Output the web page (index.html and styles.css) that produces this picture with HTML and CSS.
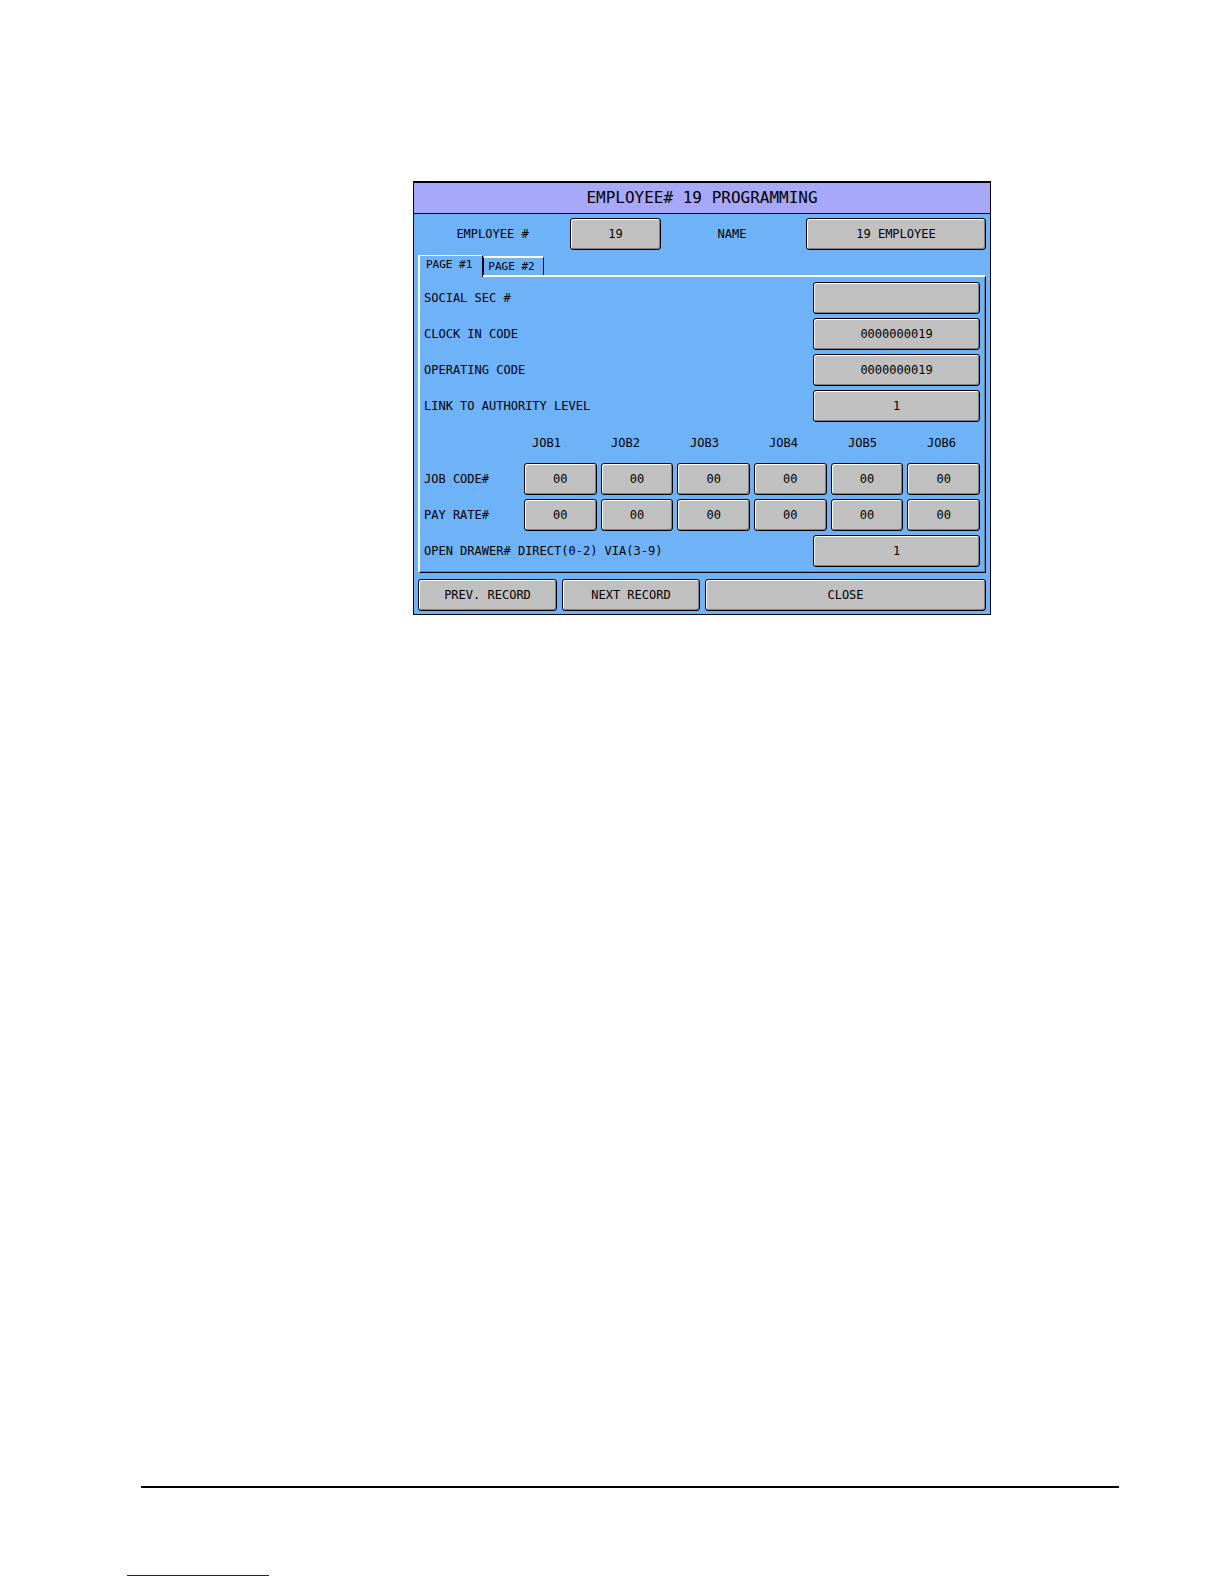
FILE: index.html
```html
<!DOCTYPE html>
<html lang="en">
<head>
    <meta charset="UTF-8">
    <meta name="viewport" content="width=device-width, initial-scale=1.0">
    <title>Employee# 19 Programming</title>
    <link rel="stylesheet" href="styles.css">
</head>
<body>

    <main class="page">
        <form class="dialog">
            <h1 class="title">EMPLOYEE# 19 PROGRAMMING</h1>

            <div class="dialog-body">
                <div class="record">
                    <label for="number">EMPLOYEE #</label>
                    <input class="key" id="number" type="text" value="19">
                    <label for="name">NAME</label>
                    <input class="key" id="name" type="text" value="19 EMPLOYEE">
                </div>

                <div class="tabs" role="tablist">
                    <button class="tab active" type="button" role="tab" aria-selected="true">PAGE #1</button>
                    <button class="tab" type="button" role="tab" aria-selected="false">PAGE #2</button>
                </div>

                <div class="panel" role="tabpanel">
                    <div class="row">
                        <label for="social">SOCIAL SEC #</label>
                        <input class="key" id="social" type="text">
                    </div>
                    <div class="row">
                        <label for="clock">CLOCK IN CODE</label>
                        <input class="key" id="clock" type="text" value="0000000019">
                    </div>
                    <div class="row">
                        <label for="operating">OPERATING CODE</label>
                        <input class="key" id="operating" type="text" value="0000000019">
                    </div>
                    <div class="row">
                        <label for="authority">LINK TO AUTHORITY LEVEL</label>
                        <input class="key" id="authority" type="text" value="1">
                    </div>

                    <div class="job-heads">
                        <span id="job1">JOB1</span>
                        <span id="job2">JOB2</span>
                        <span id="job3">JOB3</span>
                        <span id="job4">JOB4</span>
                        <span id="job5">JOB5</span>
                        <span id="job6">JOB6</span>
                    </div>
                    <div class="jobs">
                        <span id="code">JOB CODE#</span>
                        <input class="key" type="text" value="00" aria-labelledby="code job1">
                        <input class="key" type="text" value="00" aria-labelledby="code job2">
                        <input class="key" type="text" value="00" aria-labelledby="code job3">
                        <input class="key" type="text" value="00" aria-labelledby="code job4">
                        <input class="key" type="text" value="00" aria-labelledby="code job5">
                        <input class="key" type="text" value="00" aria-labelledby="code job6">
                    </div>
                    <div class="jobs">
                        <span id="rate">PAY RATE#</span>
                        <input class="key" type="text" value="00" aria-labelledby="rate job1">
                        <input class="key" type="text" value="00" aria-labelledby="rate job2">
                        <input class="key" type="text" value="00" aria-labelledby="rate job3">
                        <input class="key" type="text" value="00" aria-labelledby="rate job4">
                        <input class="key" type="text" value="00" aria-labelledby="rate job5">
                        <input class="key" type="text" value="00" aria-labelledby="rate job6">
                    </div>

                    <div class="row">
                        <label for="drawer">OPEN DRAWER# DIRECT(0-2) VIA(3-9)</label>
                        <input class="key" id="drawer" type="text" value="1">
                    </div>
                </div>

                <div class="actions">
                    <button class="key" type="button">PREV. RECORD</button>
                    <button class="key" type="button">NEXT RECORD</button>
                    <button class="key" type="button">CLOSE</button>
                </div>
            </div>
        </form>

        <footer class="footer">
            <hr class="rule">
            <hr class="link-rule">
        </footer>
    </main>

</body>
</html>
```
FILE: styles.css
```css
* {
    box-sizing: border-box;
}

body {
    margin: 0;
    background-color: #fff;
    color: #000;
    font-family: 'DejaVu Sans Mono', monospace;
    font-size: 12px;
    line-height: 16px;
}

.page {
    display: flex;
    flex-direction: column;
    justify-content: space-between;
    min-height: 100vh;
    padding: 181px 105px 8px 127px;
}

.dialog {
    margin: 0 128px 0 286px;
    border: 1px solid #000;
    border-top-width: 2px;
    background-color: #6eb2f8;
}

.title {
    margin: 0;
    border-bottom: 1px solid #000;
    background-color: #a8a8f8;
    font-size: 16px;
    font-weight: normal;
    line-height: 30px;
    text-align: center;
}

.dialog-body {
    padding: 4px 4px 3px;
}

/* grey touch keys */
.key {
    width: 100%;
    min-width: 0;
    height: 32px;
    padding: 0;
    border: 1px solid #000;
    border-radius: 3px;
    background-color: #c0c0c0;
    box-shadow: inset 1px 1px #fff, inset -1px -1px #808080;
    color: #000;
    font: inherit;
    text-align: center;
}

button.key {
    cursor: pointer;
}

.record {
    display: grid;
    grid-template-columns: 152fr 91fr 145fr 180fr;
    align-items: center;
    margin-bottom: 5px;
    text-align: center;
}

.record label {
    padding-right: 3px;
}

.tabs {
    display: flex;
    align-items: flex-end;
}

.tab {
    height: 19px;
    padding: 0 8px 0 4px;
    border: solid #000;
    border-width: 2px 1px 0 1px;
    border-top-color: #fff;
    background-color: #6eb2f8;
    color: #000;
    font-family: inherit;
    font-size: 11px;
    line-height: 16px;
    cursor: pointer;
}

/* the open tab covers the top edge of the panel */
.tab.active {
    position: relative;
    height: 22px;
    margin-bottom: -2px;
    padding: 0 10px 3px 6px;
    border-width: 1px 1px 0 2px;
    border-left-color: #fff;
}

.panel {
    display: grid;
    gap: 4px;
    padding: 5px 5px 5px 4px;
    border: 2px solid #fff;
    border-right: 1px solid #000;
    border-bottom: 1px solid #000;
    box-shadow: inset -1px -1px #6b7f94;
}

.row {
    display: grid;
    grid-template-columns: 1fr 167px;
    align-items: center;
}

.job-heads {
    display: flex;
    align-items: center;
    justify-content: space-between;
    height: 33px;
    padding: 0 24px 0 108px;
}

.jobs {
    display: grid;
    grid-template-columns: 96px repeat(6, 1fr);
    gap: 4px;
    align-items: center;
}

.actions {
    display: grid;
    grid-template-columns: 139fr 138fr 281fr;
    gap: 5px;
    margin-top: 6px;
}

.rule {
    margin: 0 0 87px 14px;
    border: 0;
    border-top: 2px solid #000;
}

.link-rule {
    width: 142px;
    margin: 0;
    border: 0;
    border-top: 1px solid #1414a8;
}
```
